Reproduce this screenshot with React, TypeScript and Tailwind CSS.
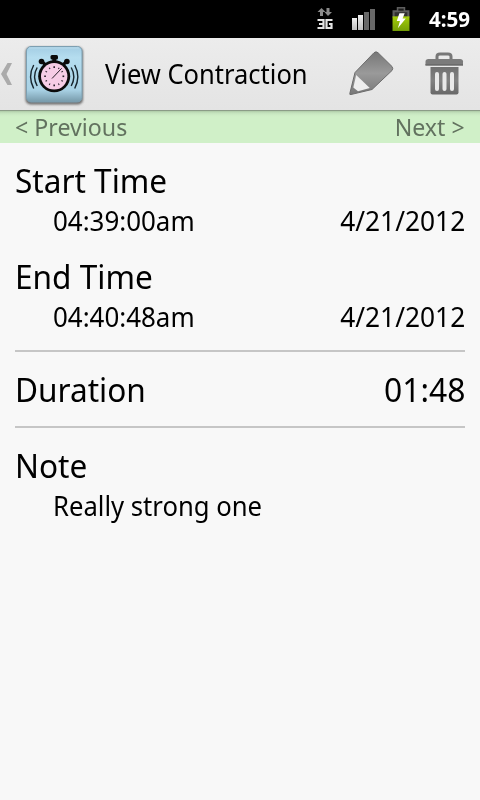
import React from "react";

function NetworkIcon() {
  return (
    <svg width="18" height="24" viewBox="0 0 18 24">
      <path d="M5.500 0 L9.500 4 H7 V8 H4 V4 H1.500Z" fill="#8a8a8a" />
      <path d="M10.500 0 H13.500 V4 H16 L12 8 L8.500 4 H10.500Z" fill="#8a8a8a" />
      <path d="M1.500 12 H7.500 V20 H1.500 M3 16 H7.500" fill="none" stroke="#e4e4e4" strokeWidth="2.200" />
      <path d="M16.500 12 H10.500 V20 H15.500 V16 H13" fill="none" stroke="#e4e4e4" strokeWidth="2.200" />
    </svg>
  );
}

function SignalIcon() {
  return (
    <svg width="25" height="24" viewBox="0 0 25 24">
      <defs>
        <linearGradient id="sig" x1="0" y1="0" x2="0" y2="1">
          <stop offset="0" stopColor="#f0f0f0" />
          <stop offset="1" stopColor="#c0c0c0" />
        </linearGradient>
      </defs>
      <rect x="1" y="10" width="5" height="12" fill="url(#sig)" />
      <rect x="7" y="7" width="5" height="15" fill="url(#sig)" />
      <rect x="13" y="4" width="5" height="18" fill="#686868" />
      <rect x="19" y="1" width="5" height="21" fill="#686868" />
    </svg>
  );
}

function BatteryIcon() {
  return (
    <svg width="18" height="25" viewBox="0.5 0 17 24" preserveAspectRatio="none">
      <defs>
        <linearGradient id="bat" x1="0" y1="0" x2="0" y2="1">
          <stop offset="0" stopColor="#a4cd0c" />
          <stop offset="1" stopColor="#76a005" />
        </linearGradient>
      </defs>
      <path d="M5 0 H13 V3 H17 V10 H1 V3 H5Z" fill="#5d5d5d" />
      <rect x="6.500" y="1.500" width="5" height="2" fill="#1c1c1c" />
      <rect x="3" y="5" width="12" height="5" fill="#303030" />
      <rect x="1" y="9" width="16" height="14" fill="url(#bat)" />
      <path d="M7.500 6 H12.500 L10.500 11 H13.500 L6 20.500 L8 13.500 H5Z" fill="#fff" />
    </svg>
  );
}

function StopwatchIcon() {
  const ticks = Array.from({ length: 12 }, (_, i) => i * 30);
  return (
    <svg width="68" height="66" viewBox="0 0 68 66">
      <defs>
        <linearGradient id="tile" x1="0" y1="0" x2="0" y2="1">
          <stop offset="0" stopColor="#a3cde3" />
          <stop offset="0.200" stopColor="#b5ddef" />
          <stop offset="0.780" stopColor="#a9d2e5" />
          <stop offset="1" stopColor="#7699a9" />
        </linearGradient>
        <filter id="soft" x="-20%" y="-20%" width="140%" height="140%">
          <feGaussianBlur stdDeviation="1.300" />
        </filter>
      </defs>
      <rect x="5.500" y="5" width="57.500" height="57.500" rx="5" fill="#444" opacity="0.750" filter="url(#soft)" />
      <rect x="6.500" y="4.500" width="55.500" height="55.500" rx="4.500" fill="url(#tile)" stroke="#7d9fb1" />
      <path d="M9 6 H59" stroke="#c2dfec" opacity="0.700" />
      <g fill="#0b0b0b">
        <rect x="30.500" y="13" width="7.500" height="4.500" rx="1.500" />
        <rect x="32.300" y="16" width="4" height="5" />
        <circle cx="21.500" cy="19.500" r="2.800" />
        <circle cx="46.900" cy="19.500" r="2.800" />
        <path d="M21 20.500 L23 18.500 L27 22 L24.500 24.500Z M47.400 20.500 L45.400 18.500 L41.400 22 L43.900 24.500Z" />
        <circle cx="34.200" cy="34.300" r="16" />
      </g>
      <circle cx="34.200" cy="34.300" r="13.200" fill="#f6cde6" />
      {ticks.map((a) => (
        <path key={a} d="M34.200 24.300 V26" stroke="#28202a" strokeWidth={a % 90 === 0 ? 1.6 : 1} transform={`rotate(${a} 34.2 34.3)`} />
      ))}
      <path d="M32 36.500 L41.700 26.300" stroke="#28202a" strokeWidth="1" />
      <g fill="none" stroke="#17252d" strokeWidth="1.400">
        <path d="M17.200 25.500 Q12 34.500 17.200 44" />
        <path d="M13.700 23 Q7.500 34.500 13.700 46.500" />
        <path d="M51.200 25.500 Q56.400 34.500 51.200 44" />
        <path d="M54.700 23 Q60.900 34.500 54.700 46.500" />
      </g>
    </svg>
  );
}

function PencilIcon() {
  return (
    <svg width="48" height="48" viewBox="0 0 48 48">
      <defs>
        <linearGradient id="pen" x1="0" y1="0" x2="0" y2="1">
          <stop offset="0" stopColor="#777" />
          <stop offset="0.500" stopColor="#9a9a9a" />
          <stop offset="1" stopColor="#777" />
        </linearGradient>
      </defs>
      <path d="M25 2.700 Q27 1 29 2.700 L43 16.500 Q44.500 18.500 43 20.500 L23 39.500 L2 44.500 Q0.500 45 0.800 43.500 L6 22.500Z" fill="url(#pen)" stroke="#6c6c6c" strokeWidth="1" />
      <path d="M7.200 25 L20.800 38 L9 41.300 L4.300 37.500Z" fill="#eeeeee" />
    </svg>
  );
}

function TrashIcon() {
  return (
    <svg width="40" height="46" viewBox="0 0 40 46">
      <defs>
        <linearGradient id="bin" x1="0" y1="0" x2="0" y2="1">
          <stop offset="0" stopColor="#707070" />
          <stop offset="0.500" stopColor="#828282" />
          <stop offset="1" stopColor="#686868" />
        </linearGradient>
      </defs>
      <path d="M12 8 V5.500 Q12 3 15 3 H23 Q26 3 26 5.500 V8" fill="none" stroke="#777" strokeWidth="3" />
      <path d="M0.500 14.500 V10.500 Q0.500 8 3.500 8 H35 Q38 8 38 10.500 V14.500Z" fill="#7b7b7b" />
      <rect x="0.500" y="13" width="37.500" height="1.500" fill="#6b6b6b" />
      <path d="M5.500 16 H33.500 V41.500 Q33.500 43.500 31.500 43.500 H7.500 Q5.500 43.500 5.500 41.500Z" fill="url(#bin)" />
      <g fill="#e9e9e9">
        <rect x="10" y="21" width="4" height="19" rx="2" />
        <rect x="17.500" y="21" width="4" height="19" rx="2" />
        <rect x="25" y="21" width="4" height="19" rx="2" />
      </g>
    </svg>
  );
}

function Heading({ children }: { children: React.ReactNode }) {
  return <h2 className="h-10 origin-left scale-x-[0.957] text-[33px] leading-[42px] whitespace-nowrap">{children}</h2>;
}

function TimeRow({ time, date }: { time: string; date: string }) {
  return (
    <div className="flex h-10 justify-between pl-[38px] text-[27px] leading-[42px] whitespace-nowrap">
      <span className="origin-left scale-x-[0.96]">{time}</span>
      <span className="origin-right scale-x-[0.975]">{date}</span>
    </div>
  );
}

export default function App() {
  return (
    <div className="flex h-[800px] w-[480px] flex-col overflow-hidden bg-[#f8f8f8] font-['Noto_Sans',sans-serif] text-black">
      <header className="flex h-[38px] shrink-0 items-start bg-black pt-[8px] pl-[316px]">
        <NetworkIcon />
        <div className="ml-[17px]"><SignalIcon /></div>
        <div className="-mt-px ml-[16px]"><BatteryIcon /></div>
        <span className="ml-[19px] origin-left scale-x-[0.98] text-[21px] leading-[23px] font-bold text-white">4:59</span>
      </header>
      <div className="flex h-[73px] shrink-0 items-start border-b border-[#8b9c87] bg-gradient-to-b from-[#ececec] to-[#e4e4e4]">
        <svg className="mt-[25px] ml-px" width="12" height="23" viewBox="0 0 12 23">
          <path d="M6.500 0 H11 L5.500 11 L11 22 H6.500 L0 11Z" fill="#ababab" />
        </svg>
        <div className="mt-[4px] ml-[7px]"><StopwatchIcon /></div>
        <h1 className="mt-[16px] ml-[17px] w-[210px] origin-left scale-x-[0.945] text-[27px] leading-10 whitespace-nowrap">View Contraction</h1>
        <div className="mt-[12px] ml-[34px]"><PencilIcon /></div>
        <div className="mt-[13px] ml-[28px]"><TrashIcon /></div>
      </div>
      <nav className="flex h-[32px] shrink-0 justify-between bg-[linear-gradient(#adcaa6_0px,#c4e3bd_2px,#cdecc5_4px,#d0f0c8_6px)] px-[15px] text-[24px] leading-[32px] text-[#62725f]">
        <span className="origin-left scale-x-[0.966]">&lt; Previous</span>
        <span className="origin-right scale-x-[0.962]">Next &gt;</span>
      </nav>
      <main className="flex flex-col px-[15px] pt-[17px]">
        <Heading>Start Time</Heading>
        <TimeRow time="04:39:00am" date="4/21/2012" />
        <div className="mt-4"><Heading>End Time</Heading></div>
        <TimeRow time="04:40:48am" date="4/21/2012" />
        <div className="mt-[14px] h-[2px] bg-[#c6c6c6]" />
        <div className="my-[17px] flex h-10 justify-between">
          <Heading>Duration</Heading>
          <span className="origin-right scale-x-[0.965] text-[33px] leading-[42px]">01:48</span>
        </div>
        <div className="h-[2px] bg-[#c6c6c6]" />
        <div className="mt-[17px]"><Heading>Note</Heading></div>
        <p className="origin-left scale-x-[0.95] pl-[40px] text-[27px] leading-[42px]">Really strong one</p>
      </main>
    </div>
  );
}
